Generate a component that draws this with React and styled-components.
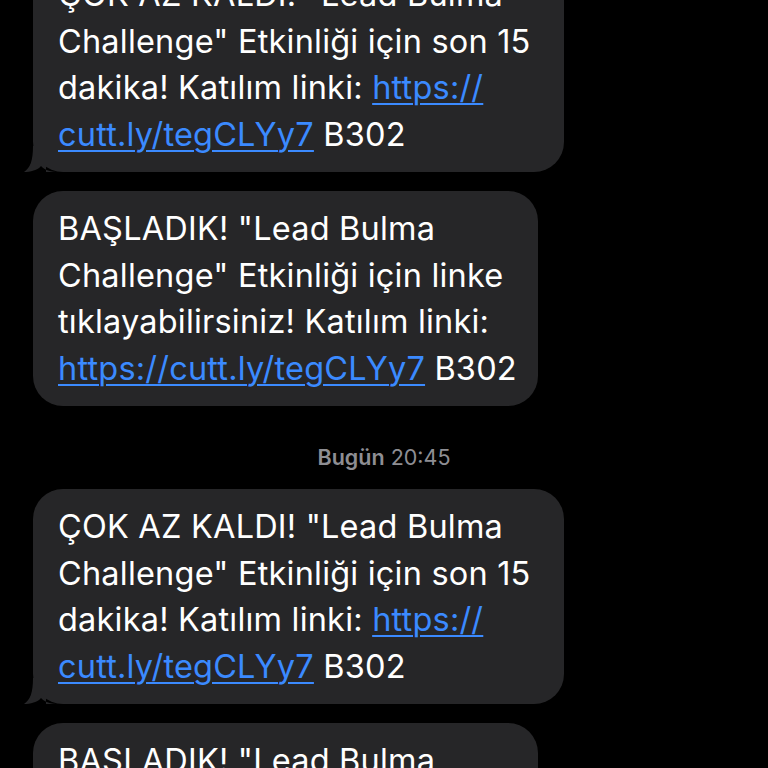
import React from 'react';
import styled, { createGlobalStyle } from 'styled-components';

const GlobalStyle = createGlobalStyle`
  html, body {
    margin: 0;
    padding: 0;
    background: #000;
  }
  body {
    font-family: Inter, "Noto Sans", "Liberation Sans", sans-serif;
    -webkit-font-smoothing: antialiased;
  }
`;

const Screen = styled.div`
  width: 768px;
  height: 768px;
  overflow: hidden;
  background: #000;
`;

// the thread is scrolled, so the first bubble starts above the top edge
const Thread = styled.div`
  display: flex;
  flex-direction: column;
  align-items: flex-start;
  gap: 19px;
  padding: 0 0 0 33px;
  margin-top: -43px;
`;

const BubbleRow = styled.div`
  position: relative;
`;

const Bubble = styled.div`
  box-sizing: border-box;
  width: ${props => props.width}px;
  background: #262628;
  border-radius: 30px;
  padding: 15px 20px 14px 25px;
  color: #fff;
  font-size: 32.5px;
  line-height: 46.5px;
  letter-spacing: 0.2px;
  white-space: nowrap;
`;

const Tail = styled.svg`
  position: absolute;
  left: -9px;
  bottom: 0;
`;

const Link = styled.a`
  color: #3b8aff;
  text-decoration: underline;
  text-decoration-thickness: 1.5px;
  text-underline-offset: 4px;
`;

const Stamp = styled.div`
  align-self: stretch;
  margin: 19px 0 0 -33px;
  text-align: center;
  color: #8e8e93;
  font-size: 21.5px;
  line-height: 26px;

  b {
    font-weight: 600;
  }
`;

const BubbleTail = () => (
  <Tail width="40" height="26" viewBox="0 0 40 26">
    <path
      d="M9 0 L22 0 L22 26 L36 26 C26 26 21 24 17 20 C14 24 6 26 0 26 C6 22 9 15 9 0 Z"
      fill="#262628"
    />
  </Tail>
);

const Hurry = ({ tail }) => (
  <BubbleRow>
    <Bubble width={531}>
      ÇOK AZ KALDI! "Lead Bulma<br />
      Challenge" Etkinliği için son 15<br />
      dakika! Katılım linki: <Link>https://</Link>
      <br />
      <Link>cutt.ly/tegCLYy7</Link> B302
    </Bubble>
    {tail && <BubbleTail />}
  </BubbleRow>
);

const Started = ({ tail }) => (
  <BubbleRow>
    <Bubble width={505}>
      BAŞLADIK! "Lead Bulma<br />
      Challenge" Etkinliği için linke<br />
      tıklayabilirsiniz! Katılım linki:<br />
      <Link>https://cutt.ly/tegCLYy7</Link> B302
    </Bubble>
    {tail && <BubbleTail />}
  </BubbleRow>
);

export default function App() {
  return (
    <Screen>
      <GlobalStyle />
      <Thread>
        <Hurry tail />
        <Started />
        <Stamp>
          <b>Bugün</b> 20:45
        </Stamp>
        <Hurry tail />
        <Started />
      </Thread>
    </Screen>
  );
}
